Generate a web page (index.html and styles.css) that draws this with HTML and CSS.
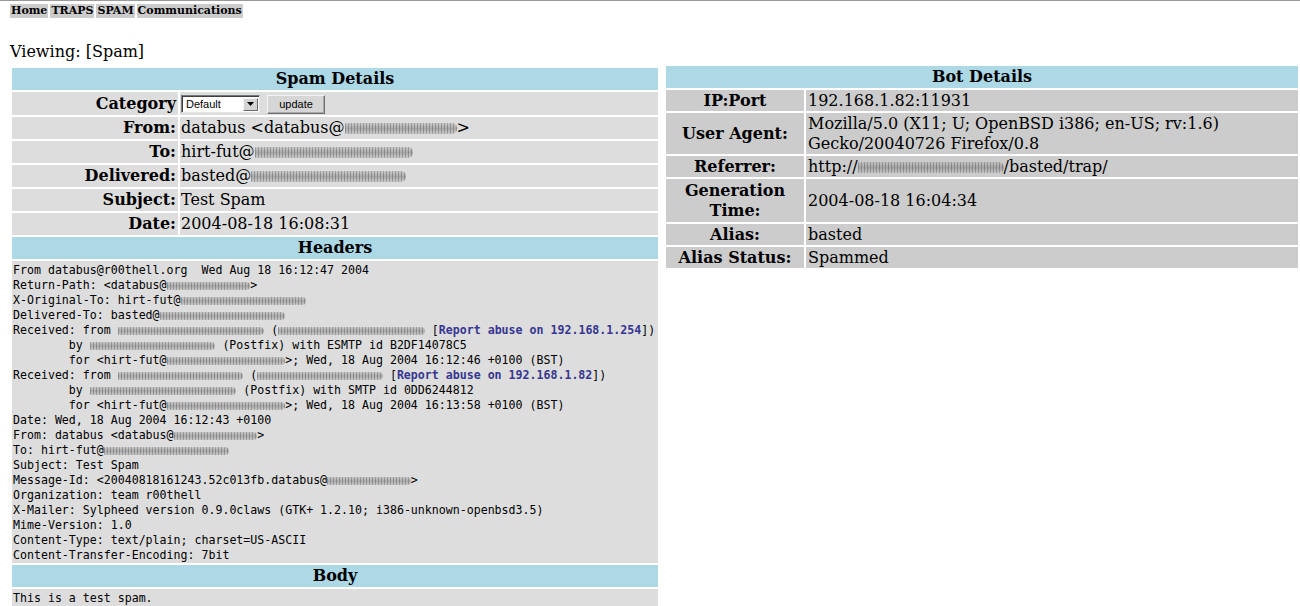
FILE: index.html
```html
<!DOCTYPE html>
<html>
<head>
<meta charset="utf-8">
<title>Viewing: [Spam]</title>
<link rel="stylesheet" href="styles.css">
</head>
<body>
<nav class="topnav">
  <a href="#">Home</a><a href="#">TRAPS</a><a href="#">SPAM</a><a href="#">Communications</a>
</nav>
<p class="viewing">Viewing: [Spam]</p>
<div class="columns">
  <section class="panel panel-spam">
    <h2 class="band">Spam Details</h2>
    <div class="kv kv-spam">
      <div class="lbl cat-lbl">Category</div>
      <div class="val cat-val">
        <span class="fake-select"><span class="fs-text">Default</span><span class="fs-arrow"><svg width="7" height="4" viewBox="0 0 7 4"><path d="M0 0h7L3.5 4z" fill="#000"/></svg></span></span>
        <button class="btn" type="button">update</button>
      </div>
      <div class="lbl">From:</div>
      <div class="val">databus &lt;databus@<span class="smudge sm-serif" style="width:112px"></span>&gt;</div>
      <div class="lbl">To:</div>
      <div class="val">hirt-fut@<span class="smudge sm-serif" style="width:158px"></span></div>
      <div class="lbl">Delivered:</div>
      <div class="val">basted@<span class="smudge sm-serif" style="width:155px"></span></div>
      <div class="lbl">Subject:</div>
      <div class="val">Test Spam</div>
      <div class="lbl">Date:</div>
      <div class="val">2004-08-18 16:08:31</div>
    </div>
    <h2 class="band">Headers</h2>
<pre class="raw">From databus@r00thell.org  Wed Aug 18 16:12:47 2004
Return-Path: &lt;databus@<span class="smudge" style="width:12ch"></span>&gt;
X-Original-To: hirt-fut@<span class="smudge" style="width:18ch"></span>
Delivered-To: basted@<span class="smudge" style="width:18ch"></span>
Received: from <span class="smudge" style="width:21ch"></span> (<span class="smudge" style="width:21ch"></span> [<a class="abuse" href="#">Report abuse on 192.168.1.254</a>])
        by <span class="smudge" style="width:18ch"></span> (Postfix) with ESMTP id B2DF14078C5
        for &lt;hirt-fut@<span class="smudge" style="width:17ch"></span>&gt;; Wed, 18 Aug 2004 16:12:46 +0100 (BST)
Received: from <span class="smudge" style="width:18ch"></span> (<span class="smudge" style="width:18ch"></span> [<a class="abuse" href="#">Report abuse on 192.168.1.82</a>])
        by <span class="smudge" style="width:21ch"></span> (Postfix) with SMTP id 0DD6244812
        for &lt;hirt-fut@<span class="smudge" style="width:17ch"></span>&gt;; Wed, 18 Aug 2004 16:13:58 +0100 (BST)
Date: Wed, 18 Aug 2004 16:12:43 +0100
From: databus &lt;databus@<span class="smudge" style="width:12ch"></span>&gt;
To: hirt-fut@<span class="smudge" style="width:18ch"></span>
Subject: Test Spam
Message-Id: &lt;20040818161243.52c013fb.databus@<span class="smudge" style="width:12ch"></span>&gt;
Organization: team r00thell
X-Mailer: Sylpheed version 0.9.0claws (GTK+ 1.2.10; i386-unknown-openbsd3.5)
Mime-Version: 1.0
Content-Type: text/plain; charset=US-ASCII
Content-Transfer-Encoding: 7bit</pre>
    <h2 class="band">Body</h2>
<pre class="raw">This is a test spam.</pre>
  </section>
  <section class="panel panel-bot">
    <h2 class="band">Bot Details</h2>
    <div class="kv kv-bot">
      <div class="lbl">IP:Port</div>
      <div class="val">192.168.1.82:11931</div>
      <div class="lbl">User Agent:</div>
      <div class="val">Mozilla/5.0 (X11; U; OpenBSD i386; en-US; rv:1.6) Gecko/20040726 Firefox/0.8</div>
      <div class="lbl">Referrer:</div>
      <div class="val">http://<span class="smudge sm-serif" style="width:146px"></span>/basted/trap/</div>
      <div class="lbl gen-lbl">Generation Time:</div>
      <div class="val">2004-08-18 16:04:34</div>
      <div class="lbl">Alias:</div>
      <div class="val">basted</div>
      <div class="lbl">Alias Status:</div>
      <div class="val">Spammed</div>
    </div>
  </section>
</div>
</body>
</html>
```

FILE: styles.css
```css
html, body {
  background: #fff;
}
body {
  margin: 0;
  border-top: 1px solid #9a9a9a;
  font-family: "DejaVu Serif", serif;
  color: #000;
}

.topnav {
  display: flex;
  gap: 2px;
  padding: 3px 10px 0;
}
.topnav a {
  background: #cccccc;
  color: #000;
  text-decoration: none;
  font-family: "DejaVu Serif", serif;
  font-weight: bold;
  font-size: 11px;
  line-height: 14px;
  padding: 0 1px;
}

.viewing {
  margin: 24px 10px 0;
  font-size: 16px;
  line-height: 20px;
}

.columns {
  display: flex;
  align-items: flex-start;
  gap: 8px;
  margin: 4px 2px 0 12px;
}

.panel {
  display: flex;
  flex-direction: column;
  gap: 2px;
}
.panel-spam {
  width: 646px;
  margin-top: 2px;
}
.panel-bot {
  width: 632px;
}

.band {
  margin: 0;
  background: #add8e6;
  font-size: 16px;
  font-weight: bold;
  line-height: 22px;
  text-align: center;
}

.kv {
  display: grid;
  gap: 2px;
}
.kv-spam {
  grid-template-columns: 166px 1fr;
}
.kv-bot {
  grid-template-columns: 138px 1fr;
}

.kv-spam .lbl,
.kv-spam .val {
  background: #dddddd;
  font-size: 16px;
  line-height: 20px;
  padding: 1px 1px;
}
.kv-spam .lbl {
  font-weight: bold;
  text-align: right;
  padding-right: 2px;
}
.kv-spam .cat-lbl,
.kv-spam .cat-val {
  padding-top: 2px;
  padding-bottom: 1px;
}
.cat-val {
  display: flex;
  align-items: center;
  gap: 7px;
}

.kv-bot .lbl,
.kv-bot .val {
  background: #cccccc;
  font-size: 16px;
  line-height: 20px;
  padding: 1px 1px 0;
  display: flex;
  align-items: center;
}
.kv-bot .lbl {
  font-weight: bold;
  text-align: center;
  justify-content: center;
}
.kv-bot .gen-lbl {
  padding-top: 2px;
  padding-bottom: 1px;
}
.kv-bot .val {
  padding-left: 2px;
}

.fake-select {
  display: inline-flex;
  align-items: center;
  justify-content: space-between;
  box-sizing: border-box;
  width: 79px;
  height: 18px;
  background: #fff;
  border: 1px solid;
  border-color: #7a7a7a #e6e6e6 #e6e6e6 #7a7a7a;
  box-shadow: inset 1px 1px 0 #404040;
  padding: 0 1px 0 4px;
  font-family: "Liberation Sans", Arial, sans-serif;
  font-size: 11px;
}
.fs-arrow {
  display: inline-flex;
  align-items: center;
  justify-content: center;
  box-sizing: border-box;
  width: 15px;
  height: 13px;
  background: #d4d4d4;
  border: 1px solid;
  border-color: #f4f4f4 #6a6a6a #6a6a6a #f4f4f4;
}

.btn {
  box-sizing: border-box;
  width: 58px;
  height: 19px;
  margin: 0;
  padding: 0;
  background: #d6d6d6;
  border: 1px solid;
  border-color: #f4f4f4 #6e6e6e #6e6e6e #f4f4f4;
  box-shadow: inset -1px -1px 0 #a8a8a8;
  font-family: "Liberation Sans", Arial, sans-serif;
  font-size: 11px;
  color: #000;
}

.raw {
  margin: 0;
  background: #dddddd;
  font-family: "DejaVu Sans Mono", monospace;
  font-size: 11.6px;
  line-height: 15px;
  padding: 2px 1px 0;
  white-space: pre;
}

.abuse {
  color: #363690;
  font-weight: bold;
  text-decoration: none;
}

.smudge {
  display: inline-block;
  height: 8px;
  vertical-align: -1px;
  border-radius: 1px 5px 5px 1px;
  background:
    repeating-linear-gradient(90deg, rgba(90, 90, 90, 0.45) 0 1px, rgba(170, 170, 170, 0.3) 1px 3px),
    linear-gradient(180deg, rgba(210, 210, 210, 0.4), rgba(130, 130, 130, 0.55) 50%, rgba(210, 210, 210, 0.4));
  filter: blur(0.7px);
}
.sm-serif {
  height: 11px;
  vertical-align: -1px;
}
```
